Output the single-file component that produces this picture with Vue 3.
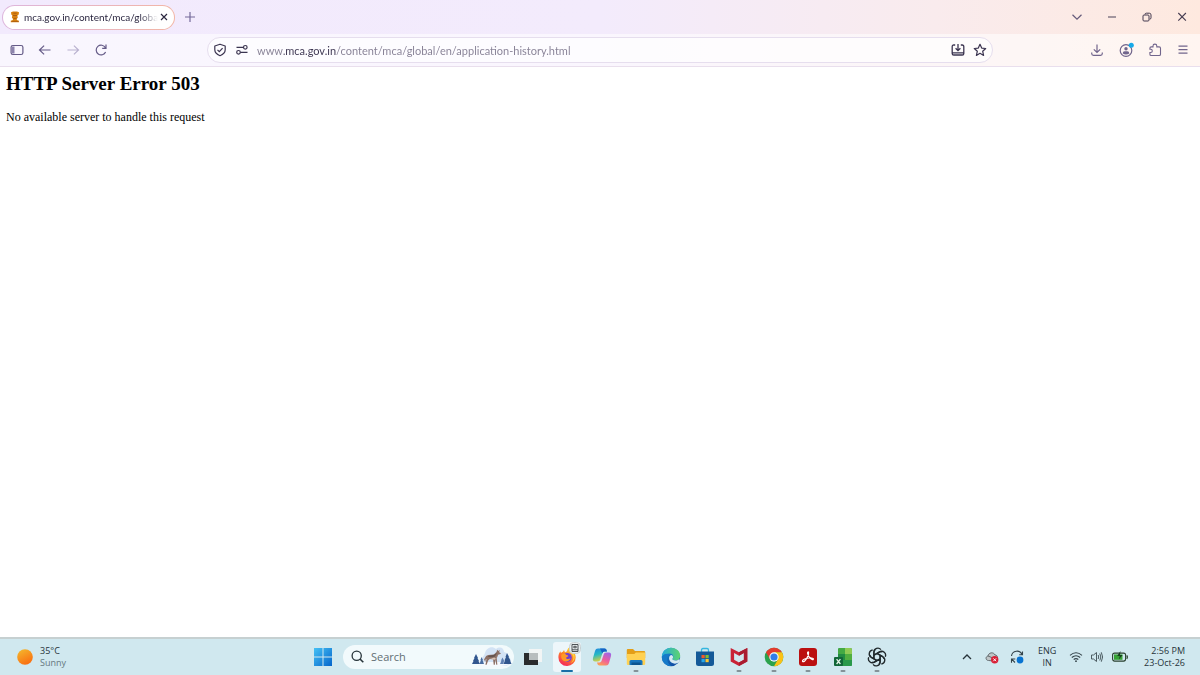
<script setup>
import { ref } from 'vue'

const address = ref('www.mca.gov.in/content/mca/global/en/application-history.html')
const query = ref('')
</script>

<template>
  <div class="screen">
    <header class="chrome">
      <div class="tabs">
        <div class="tab">
          <button class="tab-title" type="button">
            <svg class="emblem" width="10" height="12" viewBox="0 0 10 12" aria-hidden="true">
              <path d="M1 1.200 3 .4h4l2 .8-.3 2.300-1.300 1.100.4 2.200-1 .9v1.200l2.100.8v1.600H.8V9.700l2.100-.8V7.700l-1-.9.4-2.200L1.300 3.500z" fill="#d9820f" />
              <path d="M3.400 2.200h3.200M3 4.500h4M3.500 7.400h3M1.500 10.400h7" stroke="#9c4f10" stroke-width=".7" />
            </svg>
            <span class="tab-text">mca.gov.in/content/mca/globa</span>
          </button>
          <button class="icon close" type="button" aria-label="Close tab">
            <svg width="8" height="8" viewBox="0 0 8 8"><path d="m1 1 6 6M7 1 1 7" stroke="#2b2740" stroke-width="1.200" /></svg>
          </button>
        </div>
        <button class="icon new-tab" type="button" aria-label="New tab">
          <svg width="12" height="12" viewBox="0 0 12 12"><path d="M6 1v10M1 6h10" stroke="#74699a" stroke-width="1.200" /></svg>
        </button>
        <div class="window-buttons">
          <button class="icon" type="button" aria-label="List all tabs">
            <svg width="12" height="12" viewBox="0 0 12 12"><path d="m1.500 3.800 4.500 4.400 4.500-4.400" fill="none" stroke="#655a7a" stroke-width="1.200" /></svg>
          </button>
          <button class="icon" type="button" aria-label="Minimize">
            <svg width="12" height="12" viewBox="0 0 12 12"><path d="M2 6h8" stroke="#5a5065" stroke-width="1.100" /></svg>
          </button>
          <button class="icon" type="button" aria-label="Restore">
            <svg width="12" height="12" viewBox="0 0 12 12" fill="none" stroke="#453b50"><rect x="2" y="4" width="6" height="6" rx="1" /><path d="M4 3.500q0-1.300 1.300-1.300h3q1.700 0 1.700 1.700v2.900q0 1.400-1.400 1.400" /></svg>
          </button>
          <button class="icon" type="button" aria-label="Close window">
            <svg width="12" height="12" viewBox="0 0 12 12"><path d="m2.300 2 7.600 7.600M9.900 2 2.300 9.600" stroke="#453b50" stroke-width="1.100" /></svg>
          </button>
        </div>
      </div>

      <div class="toolbar">
        <nav class="nav">
          <button class="icon" type="button" aria-label="Sidebar">
            <svg width="14" height="14" viewBox="0 0 14 14"><rect x="1.100" y="2.500" width="11.800" height="9" rx="1.800" fill="none" stroke="#655b87" stroke-width="1.200" /><path d="M2 3.500h2.500v7H2z" fill="#8d84ad" /></svg>
          </button>
          <button class="icon" type="button" aria-label="Back">
            <svg width="14" height="14" viewBox="0 0 14 14"><path d="M12.500 7h-11m4.600-4.400L1.500 7l4.600 4.400" fill="none" stroke="#655b87" stroke-width="1.200" /></svg>
          </button>
          <button class="icon" type="button" aria-label="Forward" disabled>
            <svg width="14" height="14" viewBox="0 0 14 14"><path d="M1.500 7h11M7.900 2.600 12.500 7l-4.600 4.400" fill="none" stroke="#b9b1cf" stroke-width="1.200" /></svg>
          </button>
          <button class="icon" type="button" aria-label="Reload">
            <svg width="14" height="14" viewBox="0 0 14 14"><path d="M11.600 9a4.900 4.900 0 1 1-.2-4.300M12 1.600v3.800H8.200" fill="none" stroke="#655b87" stroke-width="1.200" /></svg>
          </button>
        </nav>
        <form class="address" @submit.prevent>
          <button class="icon" type="button" aria-label="Protections">
            <svg width="14" height="14" viewBox="0 0 14 14" fill="none" stroke="#3b3450" stroke-width="1.200"><path d="M7 1.200 12.200 3v3.700c0 2.900-2.500 4.900-5.200 6-2.700-1.100-5.200-3.100-5.200-6V3z" stroke-linejoin="round" /><path d="m4.500 6.800 1.800 1.800 3.300-3.400" /></svg>
          </button>
          <button class="icon" type="button" aria-label="Site permissions">
            <svg width="14" height="14" viewBox="0 0 14 14" fill="none" stroke="#3b3450" stroke-width="1.200"><path d="M1.500 4.300h7M5.300 9.300h7.200" /><circle cx="10.300" cy="4.300" r="1.800" /><circle cx="3.500" cy="9.300" r="1.800" /></svg>
          </button>
          <input v-model="address" class="url" type="text" aria-label="Address" spellcheck="false">
          <button class="icon" type="button" aria-label="Install site">
            <svg width="14" height="14" viewBox="0 0 14 14" fill="none" stroke="#3b3450" stroke-width="1.300"><path d="M4.200 2H2.800Q1.200 2 1.200 3.600v6.800q0 1.600 1.600 1.600h8.400q1.600 0 1.600-1.600V3.600Q12.800 2 11.200 2H9.800M7 1v6.500M4.600 5.300 7 7.700l2.400-2.400M1.500 9.800h11" /></svg>
          </button>
          <button class="icon bookmark" type="button" aria-label="Bookmark">
            <svg width="14" height="14" viewBox="0 0 14 14"><path d="m7 1.300 1.700 3.800 4 .4-3 2.800.9 4.100L7 10.300l-3.600 2.100.9-4.100-3-2.800 4-.4z" fill="none" stroke="#3b3450" stroke-width="1.200" stroke-linejoin="round" /></svg>
          </button>
        </form>
        <div class="tools">
          <button class="icon" type="button" aria-label="Downloads">
            <svg width="14" height="14" viewBox="0 0 14 14" fill="none" stroke="#71658c" stroke-width="1.200"><path d="M7 1.500v8M3.800 6.300 7 9.500l3.200-3.200M1.700 9.600v1q0 1.800 1.800 1.800h7q1.800 0 1.800-1.800v-1" /></svg>
          </button>
          <button class="icon" type="button" aria-label="Account">
            <svg width="16" height="16" viewBox="0 0 16 16"><circle cx="8" cy="8.500" r="5.800" fill="none" stroke="#71658c" stroke-width="1.200" /><circle cx="8" cy="6.800" r="1.700" fill="#71658c" /><path d="M4.700 11.500q0-2.200 2-2.200h2.600q2 0 2 2.200-3.300 1.800-6.600 0" fill="#71658c" /><circle cx="13.300" cy="3.300" r="2.500" fill="#16a9e8" /></svg>
          </button>
          <button class="icon" type="button" aria-label="Extensions">
            <svg width="14" height="14" viewBox="0 0 14 14"><path d="M5 3.900V3a1.900 1.900 0 0 1 3.800 0v.9h2.400q1.300 0 1.300 1.300v6q0 1.300-1.300 1.300H3.200q-1.300 0-1.300-1.300V9.500h.8a1.600 1.600 0 0 0 0-3.200h-.8V5.200q0-1.300 1.300-1.300z" fill="none" stroke="#71658c" stroke-width="1.100" /></svg>
          </button>
          <button class="icon" type="button" aria-label="Menu">
            <svg width="14" height="14" viewBox="0 0 14 14"><path d="M2.500 3.200h9M2.500 6.700h9M2.500 10.200h9" stroke="#71658c" stroke-width="1.200" /></svg>
          </button>
        </div>
      </div>
    </header>

    <main class="page">
      <h1>HTTP Server Error 503</h1>
      <p>No available server to handle this request</p>
    </main>

    <footer class="taskbar">
      <button class="weather" type="button">
        <svg width="16" height="16" viewBox="0 0 16 16" aria-hidden="true">
          <defs><linearGradient id="sun" x1=".2" y1="0" x2=".7" y2="1"><stop stop-color="#f4b62c" /><stop offset="1" stop-color="#fa6b10" /></linearGradient></defs>
          <circle cx="8" cy="8" r="7.800" fill="url(#sun)" />
        </svg>
        <span class="lines"><span class="strong">35°C</span><span class="soft">Sunny</span></span>
      </button>

      <div class="center">
        <button class="app" type="button" aria-label="Start">
          <svg width="20" height="20" viewBox="0 0 20 20">
            <defs><linearGradient id="win" x2="1" y2="1"><stop stop-color="#45c1f5" /><stop offset="1" stop-color="#0565cb" /></linearGradient></defs>
            <path d="M1 1h8.500v8.500H1zM10.500 1H19v8.500h-8.500zM1 10.500h8.500V19H1zM10.500 10.500H19V19h-8.500z" fill="url(#win)" />
          </svg>
        </button>
        <label class="search">
          <svg width="13" height="13" viewBox="0 0 13 13" aria-hidden="true"><circle cx="5.700" cy="5.700" r="4.600" fill="none" stroke="#27343a" stroke-width="1.300" /><path d="m9 9 3.300 3.300" stroke="#27343a" stroke-width="1.600" /></svg>
          <input v-model="query" type="text" placeholder="Search" aria-label="Search">
          <svg width="40" height="24" viewBox="0 0 40 24" aria-hidden="true">
            <path d="M7 20c1-8 4-6 6-12 1-5 7-8 11-4 4-3 8-1 8 3 4 1 7 6 7 11-3 4-9 3-16 3H10c-3 0-4 0-3-1" fill="#d3e3f5" />
            <path d="M4 17h34c-1 3-6 4-11 4H10c-4 0-6-2-6-4" fill="#f6f9fd" />
            <path d="m4 9 2 4h-.5l1.500 3h-.5L8 19H0l1.500-3H1l1.500-3H2z" fill="#31568e" />
            <path d="m9.500 12 1.500 3h-.5l1.500 4H7.500L9 15h-.5z" fill="#476ca1" />
            <path d="m35 8 2 4h-.5l2 3.500H38l1.500 3.500h-8l1.500-3.500h-.5l1.500-3.500h-.5z" fill="#31568e" />
            <path d="m30.500 12.500 1.500 3-.5 3.500H28l1.500-3.500H29z" fill="#5d7eb1" />
            <g transform="translate(35 2.500) scale(-.82 .86)">
              <path d="M9 2.500 10.500 4 12 2.600l.8 2.600 3.200 3 7 .5 2.500 1.300L28 14l-1.500 3-.5-3-1-1 .5 3 .8 4h-1.500L23 15l-2-1.700-4 .4-.8 6.300h-1.400l-.3-6-1.500 6h-1.200l.7-7.500-1.700-4-2.800-.8-.5-1 2-1.200z" fill="#8c7065" />
              <path d="m12 6 3.500 2.500 5.500.7 3 1.600-4 .5-5-.5z" fill="#65544f" />
              <path d="m11 8 2.500 5 2-1.500 4 1.500 2 .3-4 .7-3 .3z" fill="#d5c2b6" />
            </g>
          </svg>
        </label>

        <div class="apps">
          <button class="app" type="button" aria-label="Task view">
            <svg width="20" height="20" viewBox="0 0 20 20"><path d="M6 2h13v13H6z" fill="#f2f5f5" /><path d="M1 6h5v7h9v5H1z" fill="#292b2d" /><path d="M6 6h9v7H6z" fill="#b8bdbe" /></svg>
          </button>
          <button class="app active" type="button" aria-label="Firefox">
            <svg width="20" height="20" viewBox="0 0 20 20">
              <defs>
                <linearGradient id="fox" x1=".8" y1="0" x2=".3" y2="1"><stop stop-color="#ffe13c" /><stop offset=".45" stop-color="#ff8424" /><stop offset="1" stop-color="#f3235e" /></linearGradient>
              </defs>
              <path d="M11.500.8c2 1 3 2.500 3.300 4 1.200.4 1.200 0 1.600-.8 1.500 2 2.300 4.200 2.300 6.500A8.500 8.500 0 0 1 10 19a8.500 8.500 0 0 1-8.600-8.700c0-2.500.8-4.700 2.100-6l.4 1.600c.6-.6 1.200-1 2-1.200L7 3l.9 2.200c2.500.2 2.200-2.700 3.600-4.400" fill="url(#fox)" />
              <circle cx="10.300" cy="10.400" r="4.500" fill="#7240d1" />
              <path d="M4.500 7.500c2-1.300 4-.6 5 .6 1.500.2 2 .8 1.500 1.300-.8.6-2 .6-2 1.500.5 1.500 3 1.500 4.500.1-.8 3.700-5.800 4.500-8.200 1.700-1.200-1.500-1.400-3.500-.8-5.200" fill="#ff9a25" />
              <path d="M11.700 1.500c-.5 3 3.500 4.300 4.500 7.500.8 3-.6 6-3.200 7.300 5-1.500 5.700-6.700 3.200-10-1.500-2-3-2.500-4.500-4.800" fill="#ffd53c" />
            </svg>
            <svg class="badge" width="12" height="12" viewBox="0 0 12 12"><rect x=".5" y=".5" width="11" height="11" rx="4" fill="#e9eff0" stroke="#c7d0d3" /><path d="M3 2.500h6v7H3zM3 7.800h6M4.800 4.300h2.400v1.500H4.800z" fill="none" stroke="#3d4245" stroke-width=".9" /></svg>
            <span class="mark wide"></span>
          </button>
          <button class="app" type="button" aria-label="Copilot">
            <svg width="20" height="20" viewBox="0 0 20 20">
              <defs>
                <linearGradient id="cpa" x2=".3" y2="1"><stop stop-color="#2386e0" /><stop offset=".5" stop-color="#26b9c4" /><stop offset="1" stop-color="#d5d043" /></linearGradient>
                <linearGradient id="cpb" x1=".8" x2=".3" y2="1"><stop stop-color="#9c66e8" /><stop offset=".55" stop-color="#ec5e9e" /><stop offset="1" stop-color="#ff9c55" /></linearGradient>
              </defs>
              <path d="M6 1.500h6.500c1.500 0 2 1 2.500 3h-2.500c-1.200 0-1.800.7-2.200 2L8.500 12c-.5 1.700-1.300 2.500-3 2.500H3.300c-2.200 0-2.800-1.500-2.300-3.500l2-7C3.500 2.300 4.400 1.500 6 1.500" fill="url(#cpa)" />
              <path d="M14 18.500H7.500c-1.500 0-2-1-2.500-3h2.500c1.200 0 1.800-.7 2.200-2L11.500 8c.5-1.700 1.300-2.500 3-2.500h2.200c2.200 0 2.800 1.500 2.300 3.500l-2 7c-.5 1.700-1.400 2.500-3 2.500" fill="url(#cpb)" />
              <path d="M8 1.500h4.500c1.500 0 2 1 2.500 3h-2.500c-1.200 0-1.800.7-2.200 2z" fill="#1763c6" />
            </svg>
          </button>
          <button class="app" type="button" aria-label="File Explorer">
            <svg width="20" height="20" viewBox="0 0 20 20"><path d="M.8 3q0-1 1-1H7l2 2h9q1.200 0 1.200 1.200V11H.8z" fill="#e39e18" /><path d="M.8 7h7.500l1.500-1.500h9.400v11.300q0 1.200-1.200 1.200H2q-1.200 0-1.200-1.200z" fill="#ffd152" /><path d="M3.500 18v-3.500q0-1.500 1.500-1.500h10q1.500 0 1.500 1.500V18z" fill="#1775bd" /><path d="M5.500 15.500h9V18h-9z" fill="#0b548f" /></svg>
            <span class="mark"></span>
          </button>
          <button class="app" type="button" aria-label="Edge">
            <svg width="20" height="20" viewBox="0 0 20 20">
              <defs><linearGradient id="edt"><stop stop-color="#23a9dd" /><stop offset="1" stop-color="#5ed46d" /></linearGradient><linearGradient id="edb" y2="1" x2=".4"><stop stop-color="#199bdf" /><stop offset="1" stop-color="#1150a5" /></linearGradient></defs>
              <circle cx="10" cy="10" r="9.200" fill="url(#edb)" />
              <path d="M.8 10C1 4.500 5 .8 10 .8c5.500 0 9.200 3.700 9.200 8 0 3-2 4.700-4.600 4.700-2 0-3.400-.7-3-1.700 1.500-2.300.3-5.300-3.100-5.300C4.800 6.500 2 7.500.8 10" fill="url(#edt)" />
              <path d="M11.500 11.800c-.4 1 1.200 1.700 3 1.700 1.200 0 2.600-.4 3.500-1.200l1 .7q-.4 1.500-1.400 2.600c-3 2-8.300 1.200-9.400-3-.5-2.100.4-4.200 2.100-4.500 1.700.4 2.400 2.200 1.200 3.700" fill="#d5e9f1" />
              <path d="M8 7.500c-3 2.800-2.200 9 2.600 11.600C5 19.500.8 15 .8 10 2.500 7.500 5 6.500 8 7.500" fill="#167ac9" />
            </svg>
          </button>
          <button class="app" type="button" aria-label="Microsoft Store">
            <svg width="20" height="20" viewBox="0 0 20 20"><path d="M6.500 5V3q0-1.500 1.500-1.500h4q1.500 0 1.500 1.500v2" fill="none" stroke="#35b6df" stroke-width="1.300" /><path d="M1 4.500h18v12q0 2.500-2.500 2.500h-13Q1 19 1 16.500z" fill="#145998" /><path d="M6.500 8h3.200v3.200H6.500z" fill="#f15a2a" /><path d="M10.500 8h3.200v3.200h-3.200z" fill="#84bc30" /><path d="M6.500 12h3.200v3.200H6.500z" fill="#26a7e8" /><path d="M10.500 12h3.200v3.200h-3.200z" fill="#ffc431" /></svg>
          </button>
          <button class="app" type="button" aria-label="McAfee">
            <svg width="20" height="20" viewBox="0 0 20 20"><path d="m1.700 1 8.300 4.200L18.300 1v13.400L10 19l-8.300-4.600zm3.400 5v6.700l4.900 2.800 4.900-2.800V6L10 8.700z" fill="#c92336" fill-rule="evenodd" /><path d="M10 5.200 18.300 1v13.400L10 19v-3.500l4.900-2.800V6L10 8.700z" fill="#aa1c30" /></svg>
            <span class="mark"></span>
          </button>
          <button class="app" type="button" aria-label="Chrome">
            <svg width="20" height="20" viewBox="0 0 20 20"><circle cx="10" cy="10" r="9.300" fill="#2ba24c" /><path d="M1.950 5.350A9.300 9.300 0 0 1 18.050 5.350H10L6 12.300z" fill="#e33b2e" /><path d="M18.050 5.350A9.300 9.300 0 0 1 10 19.300l4-7L10 5.350z" fill="#fbc116" /><circle cx="10" cy="10" r="4.700" fill="#f5fafc" /><circle cx="10" cy="10" r="3.600" fill="#327ce8" /></svg>
            <span class="mark"></span>
          </button>
          <button class="app" type="button" aria-label="Acrobat">
            <svg width="20" height="20" viewBox="0 0 20 20"><rect x="1" y="1" width="18" height="18" rx="3" fill="#bb1010" /><path d="M4.500 14.500c-.5-1.700 2.500-3.200 6.500-3.500 3-.3 4.800.5 4.300 1.300-1 1.400-5-2.200-5.700-5.800-.3-1.700.9-2.300 1-.8.200 3-3.700 10.300-6.100 8.800" fill="none" stroke="#fff" stroke-width="1.200" /></svg>
            <span class="mark"></span>
          </button>
          <button class="app" type="button" aria-label="Excel">
            <svg width="20" height="20" viewBox="0 0 20 20"><rect x="5" y="1" width="14" height="18" rx="1.500" fill="#218c42" /><path d="M5 2.500Q5 1 6.500 1H12v6H5z" fill="#43aa43" /><path d="M12 1h5.500Q19 1 19 2.500V7h-7z" fill="#8fcb54" /><path d="M12 7h7v6h-7z" fill="#50af3f" /><path d="M5 13h14v4.500q0 1.500-1.500 1.500h-11Q5 19 5 17.500z" fill="#28994a" /><rect x="1" y="10" width="9" height="9" rx="1" fill="#116638" /><path d="m3.600 12.200 3.800 4.800m0-4.800L3.600 17" stroke="#e8f5eb" stroke-width="1.300" /></svg>
            <span class="mark"></span>
          </button>
          <button class="app" type="button" aria-label="ChatGPT">
            <svg width="20" height="20" viewBox="0 0 20 20" fill="none" stroke="#20292c" stroke-width="1.350">
              <g v-for="n in 6" :key="n" :transform="`rotate(${n * 60} 10 10)`">
                <path d="M6.900 11.800V5.100a3.900 3.900 0 0 1 7-2.400M6.900 8.200l5.700-3.300q1.300-.7 2.600 0" />
              </g>
            </svg>
            <span class="mark"></span>
          </button>
        </div>
      </div>

      <div class="tray">
        <button class="icon" type="button" aria-label="Show hidden icons">
          <svg width="14" height="14" viewBox="0 0 14 14"><path d="m3 9 4-4 4 4" fill="none" stroke="#27343a" stroke-width="1.300" /></svg>
        </button>
        <button class="icon" type="button" aria-label="Cloud storage error">
          <svg width="14" height="14" viewBox="0 0 14 14"><path d="M3.500 10.500C.5 10.500.2 6.500 3 6c.5-3.500 5.500-4.500 7-1 1.700 0 2.500 1.200 2.500 2.500L9 11z" fill="#bfc5c7" stroke="#646c70" /><path d="m3 6 5 2" stroke="#646c70" /><circle cx="9.700" cy="9.800" r="3.700" fill="#d91f36" /><path d="m8.300 8.400 2.800 2.800m0-2.800-2.800 2.800" stroke="#fff" /></svg>
        </button>
        <button class="icon" type="button" aria-label="Windows Update">
          <svg width="14" height="14" viewBox="0 0 14 14"><path d="M1.500 6A5.500 5.500 0 0 1 12 4.500M12.500 1.500v3.300H9.200M1.500 12.800V9h3.800M1.700 9.200 5 12.500" fill="none" stroke="#34434a" stroke-width="1.100" /><circle cx="10" cy="10" r="3.400" fill="#0873d1" /></svg>
        </button>
        <button class="lines language" type="button"><span>ENG</span><span>IN</span></button>
        <button class="status" type="button" aria-label="Network, sound and battery">
          <svg width="14" height="14" viewBox="0 0 14 14" fill="none" stroke="#34434a" stroke-width="1.100"><path d="M1 5.300q6-5 12 0M2.800 7.500q4.200-3.500 8.400 0M4.700 9.500q2.300-1.800 4.600 0" /><circle cx="7" cy="11.200" r=".9" fill="#34434a" stroke="none" /></svg>
          <svg width="14" height="14" viewBox="0 0 14 14" fill="none" stroke="#4c5c62"><path d="M1.500 5h2L6.500 2.500v9L3.500 9h-2z" /><path d="M8.200 5q1 2 0 4M9.800 3.500q2 3.500 0 7M11.300 2.300q2.600 4.700 0 9.400" /></svg>
          <svg width="18" height="14" viewBox="0 0 18 14"><rect x="1.600" y="3.100" width="13" height="8" rx="2" fill="none" stroke="#29402f" stroke-width="1.100" /><path d="M3 4.400h8.500v5.400H3z" fill="#36a336" /><path d="M15.800 5.300q1.300 1.800 0 3.600" fill="none" stroke="#29402f" stroke-width="1.300" /><path d="M9.500 1 6.200 6h2.600l-1 3.500L11.600 5H9z" fill="#173d1f" /></svg>
        </button>
        <button class="lines clock" type="button"><span>2:56 PM</span><span>23-Oct-26</span></button>
      </div>
    </footer>
  </div>
</template>

<style scoped>
.screen {
  display: flex;
  flex-direction: column;
  min-height: 100vh;
  background: #fff;
  font-family: "Open Sans", "Noto Sans", sans-serif;
}
button, input {
  padding: 0;
  border: 0;
  background: none;
  color: inherit;
  font: inherit;
}
svg { display: block; flex: none; }
input { outline: 0; }
.icon { display: flex; align-items: center; justify-content: center; flex: none; }
.chrome {
  border-bottom: 1px solid #e9dfed;
  background: linear-gradient(90deg, #f2eafd 0%, #f3ebfc 50%, #f9ebed 78%, #fee9df 100%);
  font-family: Lato, "Open Sans", sans-serif;
}
.tabs { display: flex; align-items: center; height: 34px; padding: 0 12px 0 2px; }
.tab {
  display: flex;
  align-items: center;
  width: 173px;
  height: 25px;
  padding: 0 4px 0 7px;
  border: 1px solid transparent;
  border-radius: 13px;
  background: linear-gradient(#fff, #fff) padding-box, linear-gradient(90deg, #ddb5dd, #f3b6a5) border-box;
  box-sizing: border-box;
}
.tab-title { display: flex; align-items: center; gap: 4px; flex: 1; min-width: 0; text-align: left; }
.tab-text {
  flex: 1;
  color: #2b2740;
  font-size: 10px;
  line-height: 16px;
  white-space: nowrap;
  mask-image: linear-gradient(90deg, #000 86%, transparent);
}
.close { width: 12px; height: 16px; }
.new-tab { width: 20px; height: 20px; margin-left: 5px; }
.window-buttons { display: flex; gap: 23px; margin-left: auto; }
.toolbar {
  display: grid;
  grid-template-columns: 1fr minmax(0, 786px) 1fr;
  align-items: center;
  height: 32px;
  background: rgb(255 255 255 / 55%);
}
.nav { display: flex; gap: 14px; padding-left: 10px; }
.address {
  display: flex;
  align-items: center;
  gap: 8px;
  height: 26px;
  padding: 0 5px;
  border: 1px solid #e6deee;
  border-radius: 13px;
  background: rgb(255 255 255 / 65%);
  box-sizing: border-box;
}
.url {
  flex: 1;
  min-width: 0;
  height: 20px;
  background: linear-gradient(90deg, #857f94 0 27px, #3b3450 27px 79px, #857f94 79px);
  background-clip: text;
  color: transparent;
  font-size: 11px;
}
.tools { display: flex; align-items: center; justify-content: flex-end; gap: 14px; padding-right: 10px; }
.page {
  flex: 1;
  padding: 5px 6px;
  color: #000;
  font-family: "Liberation Serif", serif;
}
h1 { margin: 0; font-size: 19px; line-height: 24px; }
p { margin: 13px 0 0; font-size: 12px; line-height: 16px; }
.taskbar {
  display: grid;
  grid-template-columns: 1fr auto 1fr;
  align-items: center;
  height: 38px;
  padding-bottom: 1px;
  border-top: 2px solid #c6d0d1;
  background: #d0e8ef;
  color: #27343a;
  font-size: 9px;
  line-height: 12px;
  box-sizing: border-box;
}
.weather { display: flex; align-items: center; gap: 7px; padding-left: 17px; text-align: left; }
.lines { display: flex; flex-direction: column; }
.soft { color: #65777e; }
.center { display: flex; align-items: center; width: 582px; }
.app {
  position: relative;
  display: flex;
  align-items: center;
  justify-content: center;
  flex: none;
  width: 28px;
  height: 30px;
  border-radius: 3px;
}
.active { background: #edf6fa; }
.badge { position: absolute; top: 0; right: 0; }
.mark {
  position: absolute;
  bottom: 0;
  left: 50%;
  width: 5px;
  height: 2px;
  border-radius: 1px;
  background: #849298;
  transform: translateX(-50%);
}
.wide { width: 12px; background: #176fa8; }
.search {
  display: flex;
  align-items: center;
  gap: 7px;
  flex: 1;
  min-width: 0;
  height: 24px;
  margin: 0 5px 0 6px;
  padding: 0 2px 0 8px;
  border-radius: 12px;
  background: #f2fafc;
  box-sizing: border-box;
}
.search input { flex: 1; min-width: 0; font-size: 11px; line-height: 16px; }
.search input::placeholder { color: #626e73; opacity: 1; }
.apps { display: flex; justify-content: space-between; flex: none; width: 372px; }
.tray { display: flex; align-items: center; justify-content: flex-end; padding-right: 15px; }
.tray > .icon { margin-right: 11px; }
.language { align-items: center; width: 24px; }
.status { display: flex; align-items: center; gap: 7px; margin: 0 15px 0 10px; }
.clock { align-items: flex-end; }
</style>

<style>
body { margin: 0; }
</style>
